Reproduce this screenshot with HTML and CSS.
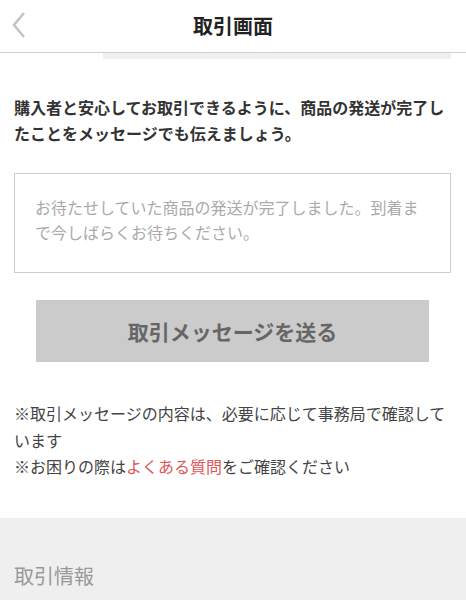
FILE: index.html
```html
<!DOCTYPE html>
<html lang="ja">
<head>
<meta charset="utf-8">
<link rel="stylesheet" href="styles.css">
</head>
<body>
<header class="header">
  <svg class="back" width="20" height="30" viewBox="0 0 20 30"><polyline points="15,3 5,15 15,27" fill="none" stroke="#c4c4c4" stroke-width="2.6"/></svg>
  <h1 class="title">取引画面</h1>
</header>
<div class="strip"></div>
<main class="main">
  <p class="lead">購入者と安心してお取引できるように、商品の発送が完了したことをメッセージでも伝えましょう。</p>
  <div class="box"><p class="placeholder">お待たせしていた商品の発送が完了しました。到着まで今しばらくお待ちください。</p></div>
  <div class="btn">取引メッセージを送る</div>
  <div class="notes">
    <p>※取引メッセージの内容は、必要に応じて事務局で確認しています</p>
    <p>※お困りの際は<span class="link">よくある質問</span>をご確認ください</p>
  </div>
</main>
<section class="info">
  <h2 class="info-title">取引情報</h2>
</section>
</body>
</html>
```
FILE: styles.css
```css
* { box-sizing: border-box; }
html, body { margin: 0; padding: 0; }
body {
  font-family: "Noto Sans CJK JP", "Noto Sans", sans-serif;
  background: #fff;
  color: #333;
  width: 466px;
  overflow: hidden;
}
.header {
  height: 53px;
  border-bottom: 1px solid #cfcfcf;
  display: flex;
  align-items: center;
  justify-content: center;
  position: relative;
}
.back {
  position: absolute;
  left: 9px;
  top: 10px;
}
.title {
  margin: 0;
  font-size: 20px;
  font-weight: 700;
  color: #222;
  line-height: 1;
}
.strip {
  margin-left: 103px;
  width: 348px;
  height: 6px;
  background: #efefef;
}
.main {
  padding: 0 14px;
}
.lead {
  margin: 35px 0 0;
  font-size: 16px;
  line-height: 26px;
  font-weight: 700;
  color: #333;
  width: 440px;
}
.box {
  margin-top: 27px;
  width: 437px;
  height: 100px;
  border: 1px solid #cdcdcd;
  padding: 21px 20px 0 20px;
}
.placeholder {
  margin: 0;
  font-size: 16px;
  line-height: 25px;
  color: #aaa;
  width: 395px;
}
.btn {
  margin: 27px 0 0 22px;
  width: 393px;
  height: 62px;
  background: #cbcbcb;
  color: #666;
  font-size: 21px;
  font-weight: 700;
  display: flex;
  align-items: center;
  justify-content: center;
}
.notes {
  margin-top: 38px;
  font-size: 16px;
  line-height: 26.5px;
  color: #444;
  width: 440px;
}
.notes p { margin: 0; }
.link { color: #e0575b; }
.info {
  margin-top: 38px;
  background: #efefef;
  height: 100px;
  padding: 43px 14px 0;
}
.info-title {
  margin: 0;
  font-size: 20px;
  font-weight: 400;
  color: #999;
  line-height: 30px;
}
```
